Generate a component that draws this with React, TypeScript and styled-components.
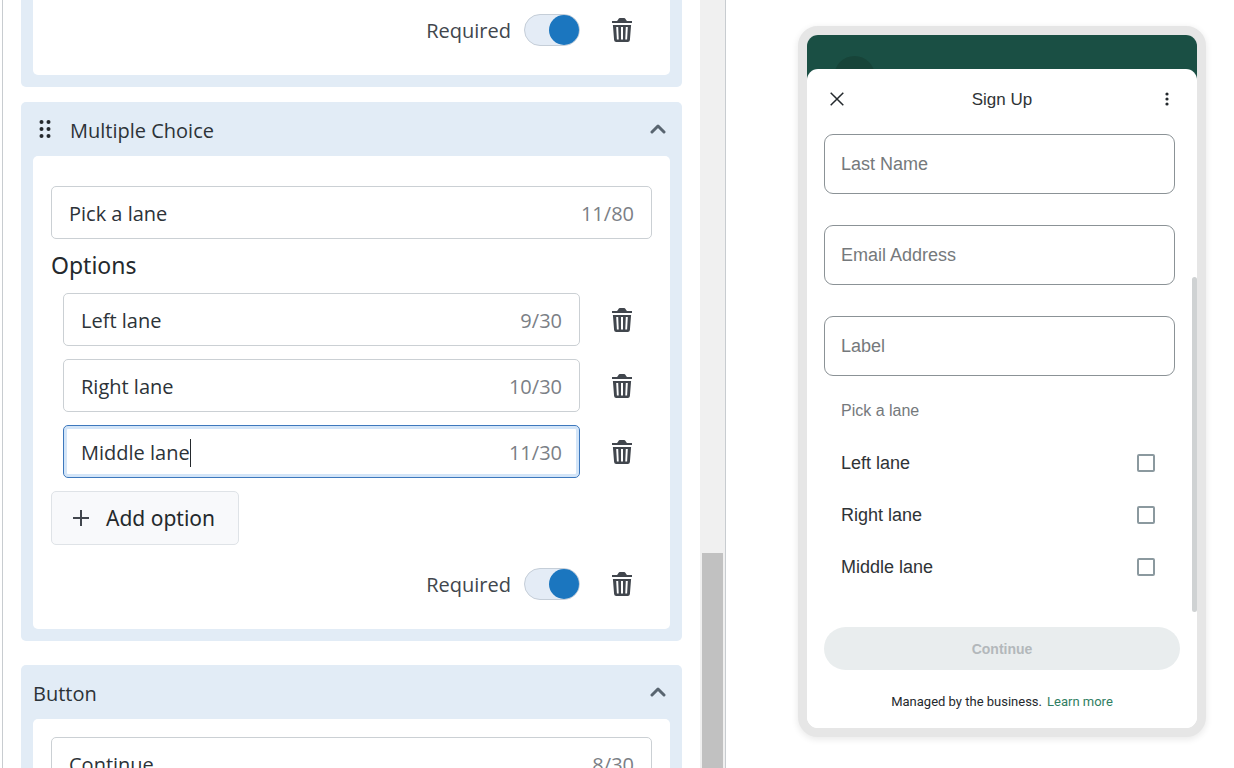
import React, { useState } from "react";
import styled, { createGlobalStyle, css } from "styled-components";

const uiFont = `"Open Sans", "Noto Sans", sans-serif`;
const strongFont = `"Noto Sans", "Open Sans", sans-serif`;
const phoneFont = `"Liberation Sans", Arial, sans-serif`;

const GlobalStyle = createGlobalStyle`
  *, *::before, *::after { box-sizing: border-box; }
  body { margin: 0; background: #ffffff; font-family: ${uiFont}; color: #2c3338; }
  button, input { font: inherit; color: inherit; }
  button { padding: 0; border: 0; background: none; cursor: pointer; }
  h2, h3, p, ul { margin: 0; padding: 0; font-weight: 400; }
`;

const Page = styled.main`
  display: grid;
  grid-template-columns: minmax(0, 726fr) minmax(0, 508fr);
  height: 100vh;
  overflow: hidden;
`;

const Editor = styled.section`
  display: flex;
  margin-left: 2px;
  border: solid #c8ccd0;
  border-width: 0 1px;
  overflow: hidden;
`;

const Blocks = styled.div`
  flex: 1;
  min-width: 0;
  padding: 0 18px;
`;

const ScrollTrack = styled.div`
  display: flex;
  flex-direction: column;
  justify-content: flex-end;
  width: 25px;
  padding: 0 2px;
  background: #f0f0f0;
`;

const ScrollThumb = styled.div`
  height: 28%;
  background: #c1c1c1;
`;

const Card = styled.article<{ $gap?: number; $open?: boolean }>`
  margin-bottom: ${(p) => p.$gap ?? 24}px;
  padding: 0 12px 12px;
  border-radius: ${(p) => (p.$open ? "0 0 5px 5px" : "5px")};
  background: #e2ecf6;
`;

const CardHeader = styled.header`
  display: flex;
  align-items: center;
  height: 54px;
`;

const CardTitle = styled.h2`
  flex: 1;
  padding-top: 4px;
  font-size: 20px;
  line-height: 28px;
`;

const DragHandle = styled.button`
  display: grid;
  place-items: center;
  width: 24px;
  height: 28px;
  margin-right: 13px;
`;

const Collapse = styled.button`
  display: grid;
  place-items: center;
  width: 24px;
  height: 24px;
  color: #596570;
`;

const CardBody = styled.div<{ $top: number; $open?: boolean }>`
  padding: ${(p) => p.$top}px 18px 29px;
  border-radius: ${(p) => (p.$open ? "0 0 5px 5px" : "5px")};
  background: #ffffff;
`;

const Field = styled.label<{ $active?: boolean }>`
  display: flex;
  flex: 1;
  align-items: center;
  min-width: 0;
  height: 53px;
  padding: 2px 17px 0;
  border: 1px solid #cbd0d4;
  border-radius: 5px;
  background: #ffffff;
  font-size: 20px;
  ${(p) =>
    p.$active &&
    css`
      border-color: #3d78bd;
      box-shadow: inset 0 0 0 3px #d3e5f8;
    `}
`;

const FieldInput = styled.input<{ $active?: boolean }>`
  flex: ${(p) => (p.$active ? "0 1 auto" : "1")};
  field-sizing: ${(p) => (p.$active ? "content" : "fixed")};
  min-width: 0;
  padding: 0;
  border: 0;
  outline: 0;
  background: transparent;
`;

const Caret = styled.span`
  width: 1px;
  height: 28px;
  background: #24292d;
`;

const Counter = styled.span`
  margin-left: auto;
  color: #7b8086;
`;

const OptionsTitle = styled.h3`
  padding-bottom: 2px;
  font-family: ${strongFont};
  font-size: 23px;
  line-height: 52px;
  color: #24292d;
`;

const OptionList = styled.ul`
  display: flex;
  flex-direction: column;
  gap: 13px;
  padding-left: 12px;
  list-style: none;
`;

const OptionRow = styled.li`
  display: flex;
  align-items: center;
  gap: 12px;
`;

const TrashButton = styled.button`
  display: grid;
  place-items: center;
  width: 60px;
  height: 32px;
  color: #41464d;
`;

const AddButton = styled.button`
  display: flex;
  align-items: center;
  gap: 17px;
  height: 54px;
  margin-top: 13px;
  padding: 0 23px 0 21px;
  border: 1px solid #dfe3e7;
  border-radius: 5px;
  background: #f8f9fb;
  font-family: ${strongFont};
  font-size: 21px;
  color: #24292d;
`;

const RequiredRow = styled.div<{ $gap?: number }>`
  display: flex;
  align-items: center;
  justify-content: flex-end;
  gap: 12px;
  height: 32px;
  margin-top: ${(p) => p.$gap ?? 0}px;
`;

const SwitchLabel = styled.label`
  display: flex;
  align-items: center;
  gap: 13px;
  font-size: 20px;
  color: #41464d;
`;

const Switch = styled.input`
  appearance: none;
  display: flex;
  align-items: center;
  width: 56px;
  height: 32px;
  margin: 0;
  border: 1px solid #c5ced8;
  border-radius: 16px;
  background: #e4ecf6;

  &::before {
    content: "";
    width: 30px;
    height: 30px;
    border-radius: 50%;
    background: #9aa5b1;
  }

  &:checked {
    justify-content: flex-end;
  }

  &:checked::before {
    background: #1b76bf;
  }
`;

const Preview = styled.section`
  padding: 26px 28px 31px 72px;
  font-family: ${phoneFont};
`;

const Phone = styled.div`
  border: 9px solid #e6e6e6;
  border-radius: 20px;
  background: #e6e6e6;
  box-shadow: 0 2px 6px 1px rgba(0, 0, 0, 0.08);
`;

const Screen = styled.div`
  overflow: hidden;
  border-radius: 11px;
  background: #ffffff;
`;

const ChatTop = styled.div`
  height: 46px;
  margin-bottom: -12px;
  padding: 21px 0 0 27px;
  background: #1a4f44;
`;

const Avatar = styled.div`
  width: 41px;
  height: 41px;
  border-radius: 50%;
  background: #174439;
`;

const Sheet = styled.form`
  position: relative;
  border-radius: 11px 11px 0 0;
  background: #ffffff;
`;

const SheetHeader = styled.header`
  display: grid;
  grid-template-columns: 28px 1fr 28px;
  align-items: center;
  height: 60px;
  padding: 0 16px;
`;

const SheetTitle = styled.h2`
  padding-top: 2px;
  font-size: 17px;
  line-height: 24px;
  text-align: center;
  color: #2f3336;
`;

const IconButton = styled.button`
  display: grid;
  place-items: center;
  height: 28px;
  color: #24292d;
`;

const SheetScroll = styled.div`
  display: flex;
  height: 498px;
`;

const SheetContent = styled.div`
  flex: 1;
  min-width: 0;
  padding: 5px 17px 0;
`;

const SheetTrack = styled.div`
  width: 5px;
  padding-top: 148px;
`;

const SheetThumb = styled.div`
  height: 335px;
  border-radius: 3px;
  background: #cfd2d3;
`;

const PhoneInput = styled.input`
  display: block;
  width: 100%;
  height: 60px;
  margin-bottom: 31px;
  padding: 0 16px;
  border: 1px solid #8b9296;
  border-radius: 9px;
  background: #ffffff;
  font-size: 18px;

  &::placeholder {
    color: #75797c;
    opacity: 1;
  }
`;

const Choices = styled.fieldset`
  margin: -22px 0 0;
  padding: 0 20px 0 17px;
  border: 0;
`;

const ChoicesTitle = styled.legend`
  padding: 0;
  font-size: 16px;
  line-height: 52px;
  color: #75797c;
`;

const Choice = styled.label`
  display: flex;
  align-items: center;
  justify-content: space-between;
  height: 52px;
  font-size: 18px;
  color: #2f3336;
`;

const Checkbox = styled.input`
  appearance: none;
  width: 18px;
  height: 18px;
  margin: 0;
  border: 2px solid #8b999f;
  border-radius: 2px;
`;

const SheetFooter = styled.footer`
  padding: 0 17px 15px;
`;

const ContinueButton = styled.button`
  width: 100%;
  height: 43px;
  border-radius: 22px;
  background: #e9edee;
  font-size: 14px;
  font-weight: 700;
  color: #b3b8bb;
`;

const Managed = styled.p`
  display: flex;
  justify-content: center;
  gap: 5px;
  padding-top: 20px;
  font-family: Roboto, sans-serif;
  font-size: 13px;
  line-height: 23px;
  color: #24292d;
`;

const LearnMore = styled.a`
  color: #2f7e62;
  text-decoration: none;
`;

const TrashIcon = () => (
  <svg width="20" height="24" viewBox="0 0 20 24" fill="currentColor" aria-hidden="true">
    <path d="M0 3h5C6 2.200 6.500 0 8 0h4c1.500 0 2 2.200 3 3h5v2H0z" />
    <path
      fillRule="evenodd"
      d="M.9 7h18.200l-1.200 15a2.200 2.200 0 0 1-2.100 2H4.200a2.200 2.200 0 0 1-2.100-2zM4.200 9l.7 12.500h1.800L6.200 9zM9 9v12.500h2V9zM13.800 9l-.5 12.500h1.800L15.800 9z"
    />
  </svg>
);

const ChevronUp = () => (
  <svg width="16" height="10" viewBox="0 0 16 10" fill="none" stroke="currentColor" strokeWidth="3" strokeLinecap="round" strokeLinejoin="round" aria-hidden="true">
    <path d="M2 8l6-6 6 6" />
  </svg>
);

const GripIcon = () => (
  <svg width="12" height="18" viewBox="0 0 12 18" fill="#24292d" aria-hidden="true">
    {[2, 9, 16].map((y) => (
      <g key={y}>
        <circle cx="2.500" cy={y} r="2" />
        <circle cx="9.500" cy={y} r="2" />
      </g>
    ))}
  </svg>
);

const Trash = ({ label }: { label: string }) => (
  <TrashButton type="button" aria-label={label}>
    <TrashIcon />
  </TrashButton>
);

interface CountedFieldProps {
  label: string;
  initial: string;
  count: string;
  active?: boolean;
}

const CountedField = ({ label, initial, count, active }: CountedFieldProps) => {
  const [value, setValue] = useState(initial);
  return (
    <Field $active={active}>
      <FieldInput $active={active} aria-label={label} value={value} onChange={(e) => setValue(e.target.value)} />
      {active && <Caret />}
      <Counter>{count}</Counter>
    </Field>
  );
};

const Required = ({ gap }: { gap?: number }) => (
  <RequiredRow $gap={gap}>
    <SwitchLabel>
      Required
      <Switch type="checkbox" role="switch" defaultChecked />
    </SwitchLabel>
    <Trash label="Delete block" />
  </RequiredRow>
);

const options = [
  { text: "Left lane", count: "9/30" },
  { text: "Right lane", count: "10/30" },
  { text: "Middle lane", count: "11/30", active: true },
];

export default function App() {
  return (
    <>
      <GlobalStyle />
      <Page>
        <Editor>
          <Blocks>
            <Card $gap={15} $open>
              <CardBody $top={14} $open>
                <Required />
              </CardBody>
            </Card>

            <Card>
              <CardHeader>
                <DragHandle type="button" aria-label="Move block">
                  <GripIcon />
                </DragHandle>
                <CardTitle>Multiple Choice</CardTitle>
                <Collapse type="button" aria-label="Collapse">
                  <ChevronUp />
                </Collapse>
              </CardHeader>
              <CardBody $top={30}>
                <CountedField label="Label" initial="Pick a lane" count="11/80" />
                <OptionsTitle>Options</OptionsTitle>
                <OptionList>
                  {options.map((o) => (
                    <OptionRow key={o.text}>
                      <CountedField label="Option" initial={o.text} count={o.count} active={o.active} />
                      <Trash label={`Delete ${o.text}`} />
                    </OptionRow>
                  ))}
                </OptionList>
                <AddButton type="button">
                  <svg width="16" height="16" viewBox="0 0 16 16" stroke="#41464d" strokeWidth="2" aria-hidden="true">
                    <path d="M8 0v16M0 8h16" />
                  </svg>
                  Add option
                </AddButton>
                <Required gap={23} />
              </CardBody>
            </Card>

            <Card>
              <CardHeader>
                <CardTitle>Button</CardTitle>
                <Collapse type="button" aria-label="Collapse">
                  <ChevronUp />
                </Collapse>
              </CardHeader>
              <CardBody $top={18}>
                <CountedField label="Button text" initial="Continue" count="8/30" />
              </CardBody>
            </Card>
          </Blocks>
          <ScrollTrack>
            <ScrollThumb />
          </ScrollTrack>
        </Editor>

        <Preview>
          <Phone>
            <Screen>
              <ChatTop>
                <Avatar />
              </ChatTop>
              <Sheet>
                <SheetHeader>
                  <IconButton type="button" aria-label="Close">
                    <svg width="14" height="14" viewBox="0 0 14 14" stroke="currentColor" strokeWidth="1.500" aria-hidden="true">
                      <path d="M.7.7l12.600 12.600M13.300.7L.7 13.300" />
                    </svg>
                  </IconButton>
                  <SheetTitle>Sign Up</SheetTitle>
                  <IconButton type="button" aria-label="More">
                    <svg width="4" height="14" viewBox="0 0 4 14" fill="currentColor" aria-hidden="true">
                      <circle cx="2" cy="2" r="1.600" />
                      <circle cx="2" cy="7" r="1.600" />
                      <circle cx="2" cy="12" r="1.600" />
                    </svg>
                  </IconButton>
                </SheetHeader>
                <SheetScroll>
                  <SheetContent>
                    <PhoneInput aria-label="Last Name" placeholder="Last Name" />
                    <PhoneInput aria-label="Email Address" placeholder="Email Address" />
                    <PhoneInput aria-label="Label" placeholder="Label" />
                    <Choices>
                      <ChoicesTitle>Pick a lane</ChoicesTitle>
                      {options.map((o) => (
                        <Choice key={o.text}>
                          {o.text}
                          <Checkbox type="checkbox" />
                        </Choice>
                      ))}
                    </Choices>
                  </SheetContent>
                  <SheetTrack>
                    <SheetThumb />
                  </SheetTrack>
                </SheetScroll>
                <SheetFooter>
                  <ContinueButton type="button" disabled>
                    Continue
                  </ContinueButton>
                  <Managed>
                    <span>Managed by the business.</span>
                    <LearnMore href="#">Learn more</LearnMore>
                  </Managed>
                </SheetFooter>
              </Sheet>
            </Screen>
          </Phone>
        </Preview>
      </Page>
    </>
  );
}
